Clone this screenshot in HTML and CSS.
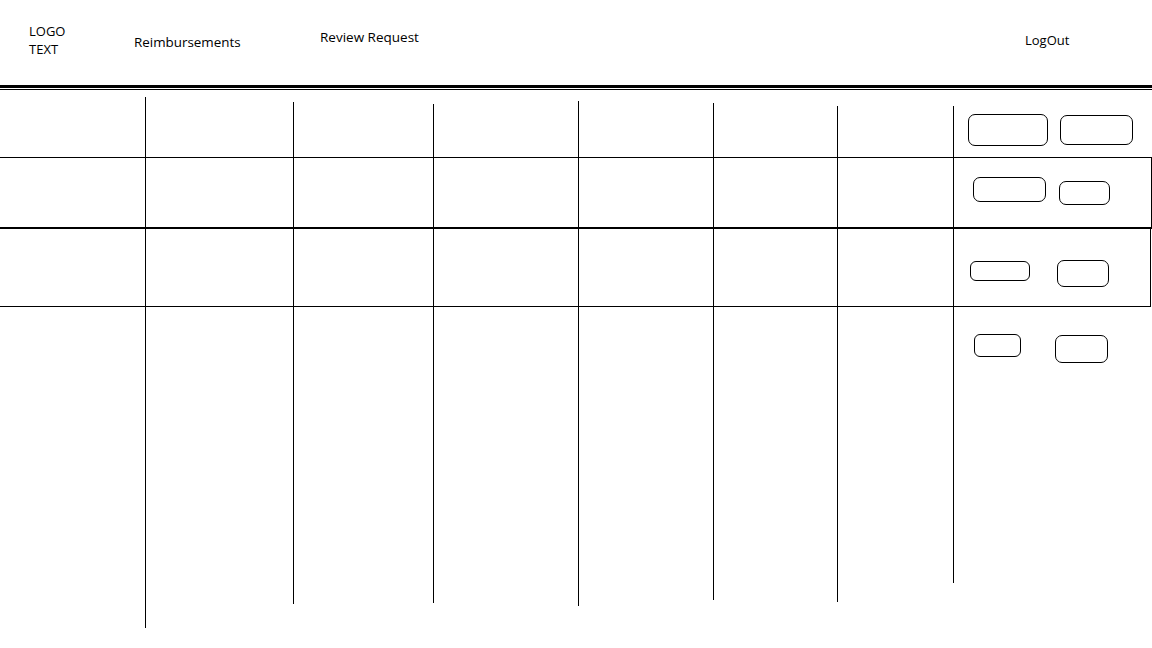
FILE: index.html
```html
<!DOCTYPE html>
<html lang="en">
<head>
<meta charset="utf-8">
<title>Reimbursements</title>
<link rel="stylesheet" href="styles.css">
</head>
<body>
<header class="topbar">
  <div class="logo">LOGO<br>TEXT</div>
  <a class="nav nav-reimb">Reimbursements</a>
  <a class="nav nav-review">Review Request</a>
  <a class="nav nav-logout">LogOut</a>
</header>
<div class="rule-thick"></div>
<div class="rule-thin"></div>
<main class="board">
  <div class="row-line row-line-1"></div>
  <div class="row-line row-line-2"></div>

  <div class="vline c2"></div>
  <div class="vline c3"></div>
  <div class="vline c4"></div>
  <div class="vline c5"></div>
  <div class="vline c6"></div>
  <div class="vline c7"></div>
  <div class="vline c8"></div>

  <div class="actions r1">
    <button class="btn b11"></button>
    <button class="btn b12"></button>
  </div>
  <div class="actions r2">
    <button class="btn b21"></button>
    <button class="btn b22"></button>
  </div>
  <div class="actions r3">
    <button class="btn b31"></button>
    <button class="btn b32"></button>
  </div>
  <div class="actions r4">
    <button class="btn b41"></button>
    <button class="btn b42"></button>
  </div>
</main>
</body>
</html>
```

FILE: styles.css
```css
* { box-sizing: border-box; }

html, body {
  margin: 0;
  padding: 0;
  background: #fff;
  width: 1152px;
  height: 648px;
  overflow: hidden;
  font-family: "Open Sans", "Noto Sans", sans-serif;
  font-size: 13px;
  line-height: 18px;
  color: #000;
}

.topbar {
  display: flex;
  align-items: flex-start;
  height: 85px;
}

.logo {
  width: 105px;
  margin-left: 29px;
  margin-top: 22px;
}

.nav {
  color: #000;
  text-decoration: none;
  white-space: nowrap;
}

.nav-reimb {
  width: 186px;
  margin-top: 33px;
  font-size: 13.4px;
}

.nav-review {
  flex: 1;
  margin-top: 28px;
  font-size: 13.5px;
}

.nav-logout {
  width: 127px;
  margin-top: 31px;
}

.rule-thick {
  height: 3px;
  background: #000;
}

.rule-thin {
  height: 1px;
  margin-top: 1px;
  background: #000;
}

.board {
  display: grid;
  grid-template-columns: 145px 148px 140px 145px 135px 124px 116px 199px;
  grid-template-rows: 67px 72px 78px 321px;
}

.row-line {
  grid-column: 1 / -1;
}

.row-line-1 {
  grid-row: 2;
  border-top: 1px solid #000;
  border-right: 1px solid #000;
  border-bottom: 2px solid #000;
}

.row-line-2 {
  grid-row: 3;
  margin-right: 1px;
  border-right: 1px solid #000;
  border-bottom: 1px solid #000;
}

.vline {
  grid-row: 1 / -1;
  border-left: 1px solid #000;
}

.c2 { grid-column: 2; margin-top: 7px;  margin-bottom: 0; }
.c3 { grid-column: 3; margin-top: 12px; margin-bottom: 24px; }
.c4 { grid-column: 4; margin-top: 14px; margin-bottom: 25px; }
.c5 { grid-column: 5; margin-top: 11px; margin-bottom: 22px; }
.c6 { grid-column: 6; margin-top: 13px; margin-bottom: 28px; }
.c7 { grid-column: 7; margin-top: 16px; margin-bottom: 26px; }
.c8 { grid-column: 8; margin-top: 16px; margin-bottom: 45px; }

.actions {
  grid-column: 8;
  display: flex;
  align-items: flex-start;
}

.r1 { grid-row: 1; }
.r2 { grid-row: 2; }
.r3 { grid-row: 3; }
.r4 { grid-row: 4; }

.btn {
  display: block;
  padding: 0;
  background: #fff;
  border: 1px solid #000;
  border-radius: 7px;
  font: inherit;
}

.b11 { margin-left: 15px; margin-top: 24px; width: 80px; height: 32px; }
.b12 { margin-left: 12px; margin-top: 25px; width: 73px; height: 30px; }

.b21 { margin-left: 20px; margin-top: 20px; width: 73px; height: 25px; }
.b22 { margin-left: 13px; margin-top: 24px; width: 51px; height: 24px; }

.b31 { margin-left: 17px; margin-top: 32px; width: 60px; height: 20px; border-radius: 6px; }
.b32 { margin-left: 27px; margin-top: 31px; width: 52px; height: 27px; }

.b41 { margin-left: 21px; margin-top: 27px; width: 47px; height: 23px; border-radius: 6px; }
.b42 { margin-left: 34px; margin-top: 28px; width: 53px; height: 28px; }
```
